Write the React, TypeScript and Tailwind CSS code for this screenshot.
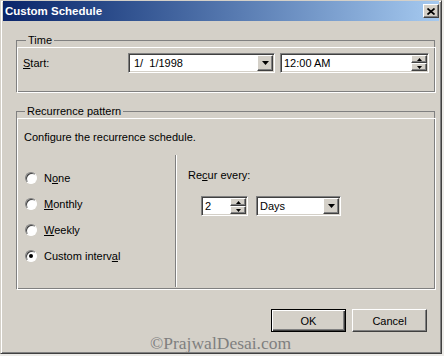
import React from "react";

const sunken =
  "border border-t-[#808080] border-l-[#808080] border-b-white border-r-white shadow-[inset_1px_1px_0_#404040,inset_-1px_-1px_0_#d4d0c8] bg-white";
const raised =
  "border border-t-[#ffffff] border-l-[#ffffff] border-b-[#404040] border-r-[#404040] shadow-[inset_-1px_-1px_0_#808080] bg-[#d4d0c8]";

const DownArrow = () => (
  <svg width="7" height="4" viewBox="0 0 7 4">
    <path d="M0 0h7L3.5 4z" fill="#000" />
  </svg>
);

const ComboButton = () => (
  <div className={`w-[16px] h-[16px] flex items-center justify-center ${raised}`}>
    <DownArrow />
  </div>
);

const Spinner = () => (
  <div className="flex flex-col w-[16px] h-[16px]">
    <div className={`h-[8px] flex items-center justify-center ${raised}`}>
      <svg width="5" height="3" viewBox="0 0 5 3">
        <path d="M2.5 0L5 3H0z" fill="#000" />
      </svg>
    </div>
    <div className={`h-[8px] flex items-center justify-center ${raised}`}>
      <svg width="5" height="3" viewBox="0 0 5 3">
        <path d="M0 0h5L2.5 3z" fill="#000" />
      </svg>
    </div>
  </div>
);

const Radio = ({ label, checked }: { label: React.ReactNode; checked?: boolean }) => (
  <div className="h-[26px] flex items-center pl-[8px]">
    <div className="w-[12px] h-[12px] rounded-full bg-white border border-t-[#808080] border-l-[#808080] border-b-white border-r-white shadow-[inset_1px_1px_0_#404040] flex items-center justify-center">
      {checked && <div className="w-[4px] h-[4px] rounded-full bg-black" />}
    </div>
    <span className="ml-[7px]">{label}</span>
  </div>
);

const U = ({ children }: { children: React.ReactNode }) => (
  <span className="underline underline-offset-[1px]">{children}</span>
);

// etched group box: gray frame with a white frame 1px down-right
const GroupBox = ({
  title,
  legendClass,
  children,
}: {
  title: string;
  legendClass: string;
  children: React.ReactNode;
}) => (
  <fieldset className="relative mt-[12px] ml-[13px] mr-[4px] border border-[#808080] p-0 min-w-0">
    <div className="pointer-events-none absolute left-0 top-0 -right-[2px] -bottom-[2px] border border-white" />
    <legend className={`relative z-10 bg-[#d4d0c8] px-[2px] leading-[14px] ${legendClass}`}>{title}</legend>
    {children}
  </fieldset>
);

export default function App() {
  return (
    <div className="w-[444px] h-[356px] bg-[#ecebe8] relative overflow-hidden font-['Liberation_Sans',Arial,sans-serif] text-[11px] leading-[14px] text-black">
      <div className="w-[442px] h-[354px] bg-[#d4d0c8] flex flex-col border border-t-[#d4d0c8] border-l-[#d4d0c8] border-r-[#404040] border-b-[#404040] shadow-[inset_1px_1px_0_#fff,inset_-1px_-1px_0_#808080] px-[2px]">
        {/* Title bar */}
        <div className="h-[20px] flex items-center justify-between pl-[2px] bg-linear-to-r from-[#0a246a] to-[#a6caf0]">
          <span className="text-white font-bold text-[11.5px]">Custom Schedule</span>
          <div className={`w-[16px] h-[14px] flex items-center justify-center ${raised}`}>
            <svg width="8" height="7" viewBox="0 0 8 7">
              <path d="M0.5 0.5L7.5 6.5M7.5 0.5L0.5 6.5" stroke="#000" strokeWidth="1.7" />
            </svg>
          </div>
        </div>

        {/* Time */}
        <GroupBox title="Time" legendClass="ml-[9px]">
          <div className="flex items-center pt-[6px] pb-[18px] pl-[6px]">
            <span className="w-[105px]">
              <U>S</U>tart:
            </span>
            <div className={`w-[147px] h-[20px] flex items-center pl-[5px] pr-[1px] ${sunken}`}>
              <span className="flex-1">1/&nbsp;&nbsp;1/1998</span>
              <ComboButton />
            </div>
            <div className={`ml-[5px] w-[149px] h-[20px] flex items-center pl-[3px] pr-[1px] ${sunken}`}>
              <span className="flex-1">12:00 AM</span>
              <Spinner />
            </div>
          </div>
        </GroupBox>

        {/* Recurrence pattern */}
        <GroupBox title="Recurrence pattern" legendClass="ml-[8px]">
          <div className="pt-[12px] pl-[7px]">Configure the recurrence schedule.</div>
          <div className="mt-[11px] h-[133px] flex">
            <div className="w-[158px] pt-[10px] flex flex-col">
              <Radio label={<>N<U>o</U>ne</>} />
              <Radio label={<><U>M</U>onthly</>} />
              <Radio label={<><U>W</U>eekly</>} />
              <Radio label={<>Custom interv<U>a</U>l</>} checked />
            </div>
            <div className="w-[2px] h-[132px] border-l border-l-[#808080] border-r border-r-white" />
            <div className="flex-1 flex flex-col">
              <div className="pt-[13px] pl-[11px]">
                Re<U>c</U>ur every:
              </div>
              <div className="mt-[14px] pl-[24px] flex items-center">
                <div className={`w-[47px] h-[20px] flex items-center pl-[3px] pr-[1px] ${sunken}`}>
                  <span className="flex-1">2</span>
                  <Spinner />
                </div>
                <div className={`ml-[8px] w-[85px] h-[20px] flex items-center pl-[3px] pr-[1px] ${sunken}`}>
                  <span className="flex-1">Days</span>
                  <ComboButton />
                </div>
              </div>
            </div>
          </div>
        </GroupBox>

        {/* Buttons */}
        <div className="mt-[20px] mr-[12px] flex justify-end gap-[6px]">
          <div className="w-[75px] h-[23px] flex items-center justify-center border border-black shadow-[inset_1px_1px_0_#fff,inset_-1px_-1px_0_#404040,inset_-2px_-2px_0_#808080] bg-[#d4d0c8]">
            OK
          </div>
          <div className={`w-[75px] h-[23px] flex items-center justify-center ${raised}`}>Cancel</div>
        </div>
      </div>

      {/* Watermark */}
      <div className="absolute left-[150px] top-[335px] leading-none text-[17.5px] text-[#7f7f7f] font-['Liberation_Serif',serif]">
        ©PrajwalDesai.com
      </div>
    </div>
  );
}
